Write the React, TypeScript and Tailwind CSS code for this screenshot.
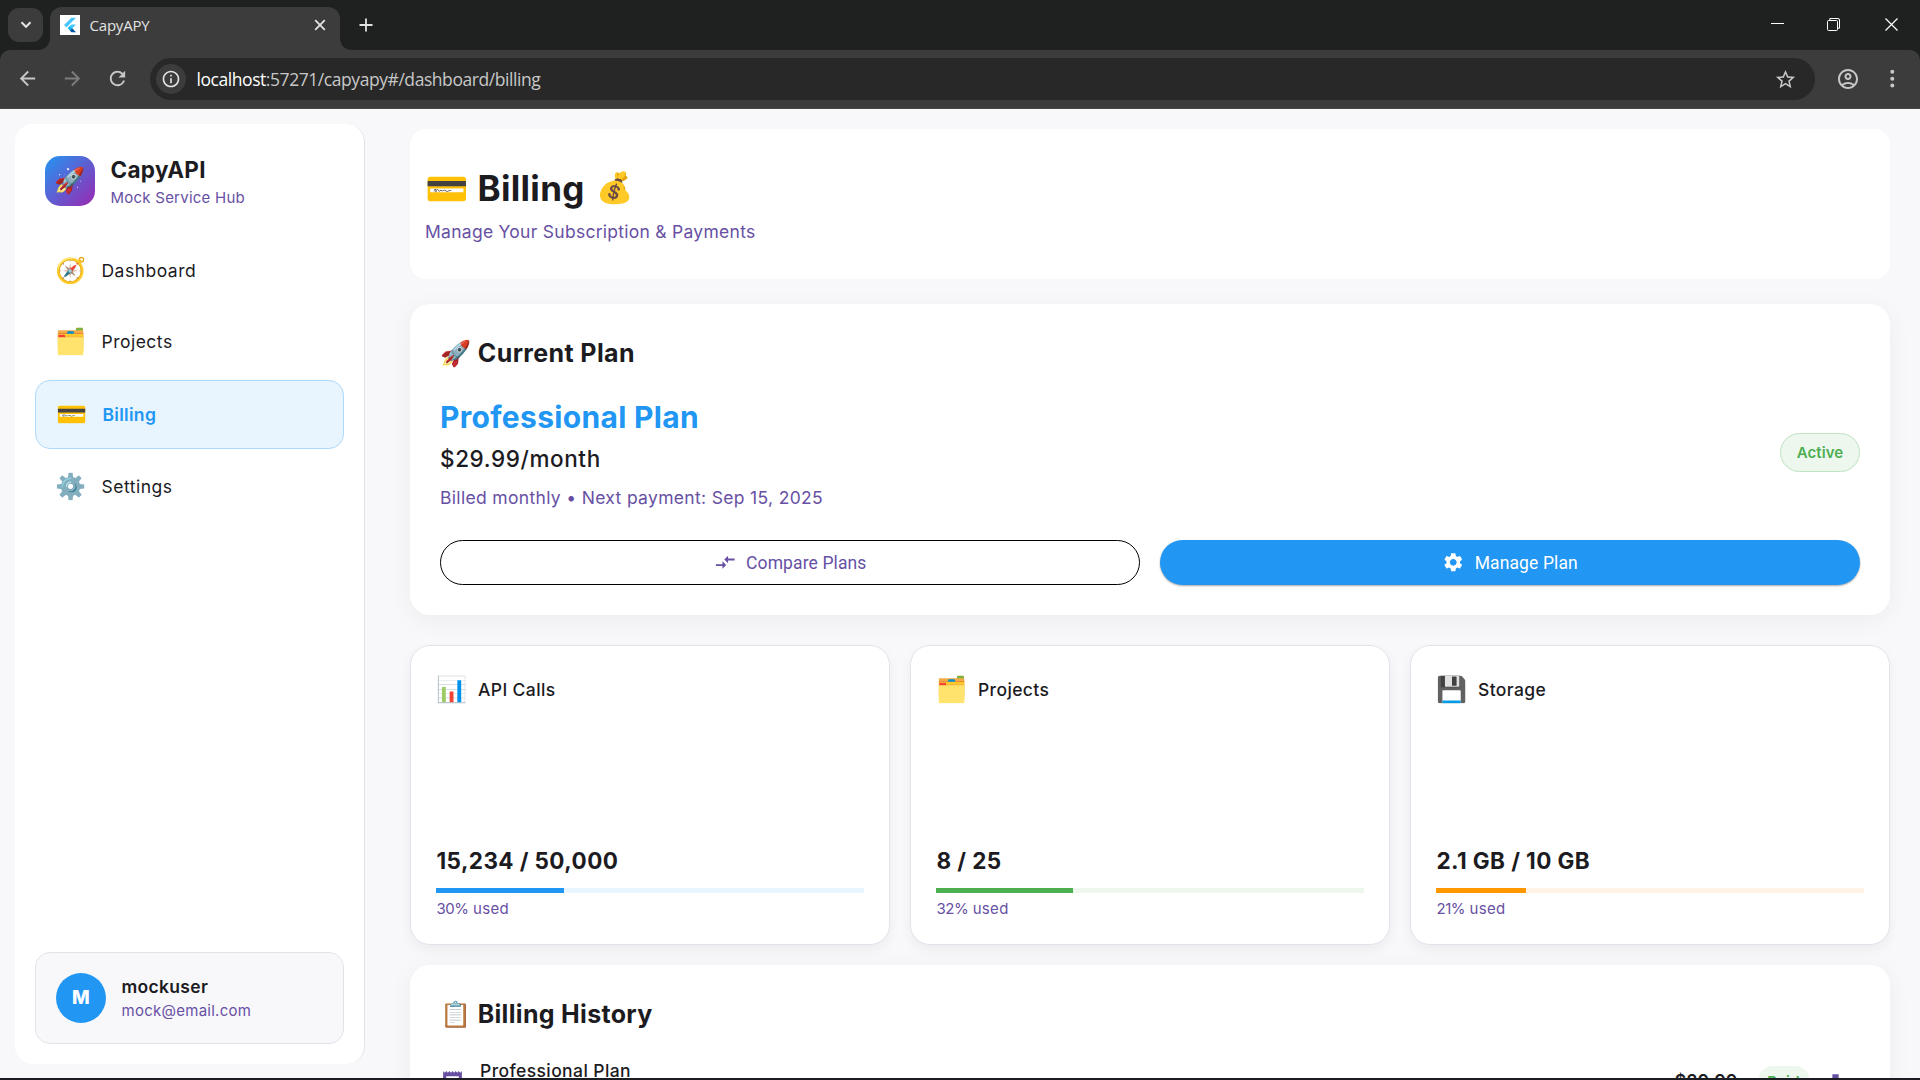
import {
  MdArrowBack,
  MdArrowForward,
  MdCompareArrows,
  MdDownload,
  MdInfoOutline,
  MdOutlineAccountCircle,
  MdReceipt,
  MdRefresh,
  MdSettings,
  MdStarBorder,
} from "react-icons/md";

function FlutterLogo() {
  return (
    <svg viewBox="0 0 20 20" className="size-5 shrink-0">
      <rect width="20" height="20" fill="#fff" />
      <path d="M11.4 2.8h4.6L6.3 12.4 4.1 10z" fill="#47c5fb" />
      <path d="M11.4 9.6H16l-3.9 3.8-2.2-2.3z" fill="#47c5fb" />
      <path d="M7.7 13.3l2.2-2.3 2.3 2.3-2.3 2.3z" fill="#00b5f8" />
      <path d="M9.9 15.6l2.3-2.3L16 17.2h-4.6z" fill="#00569e" />
    </svg>
  );
}

function TabFlare({ flip = false }: { flip?: boolean }) {
  return (
    <svg viewBox="0 0 12 12" className={flip ? "size-3 -scale-x-100 self-end" : "size-3 self-end"}>
      <path d="M12 0v12H0C7 12 12 7 12 0z" fill="#3c3c3c" />
    </svg>
  );
}

function TabStrip() {
  return (
    <div className="flex h-[50px] bg-[#1f2120]">
      <div className="mt-2 ml-2 flex h-[34px] w-[35px] items-center justify-center rounded-[11px] bg-[#3c3c3c]">
        <svg viewBox="0 0 12 8" className="h-2 w-3" fill="none" stroke="#e3e3e3" strokeWidth="2">
          <path d="M1.5 1.2L6 5.8l4.500-4.600" />
        </svg>
      </div>
      <div className="-ml-[5px] flex">
        <TabFlare />
        <div className="mt-[7px] flex w-[290px] items-start rounded-t-[12px] bg-[#3c3c3c] pl-2.5">
          <div className="mt-2 flex">
            <FlutterLogo />
          </div>
          <span className="mt-2 ml-[9.500px] text-[15px] leading-5 tracking-[-0.2px] text-[#e3e3e3]">CapyAPY</span>
          <svg viewBox="0 0 12 12" className="mt-3 mr-[14px] ml-auto size-3" stroke="#e3e3e3" strokeWidth="1.8">
            <path d="M1.200 1.200l9.600 9.600M10.800 1.200l-9.600 9.600" />
          </svg>
        </div>
        <TabFlare flip />
      </div>
      <svg viewBox="0 0 14 14" className="mt-[18px] ml-[7px] size-[14px]" stroke="#e3e3e3" strokeWidth="1.8">
        <path d="M7 0.500v13M0.500 7h13" />
      </svg>
      <div className="mt-[18px] mr-[22px] ml-auto flex text-white">
        <svg viewBox="0 0 13 13" className="size-[13px]" stroke="currentColor">
          <path d="M0 5.500h13" />
        </svg>
        <svg viewBox="0 0 13 13" className="ml-[43px] size-[13px]" fill="none" stroke="currentColor">
          <rect x="0.500" y="2.500" width="10" height="10" rx="1" />
          <path d="M2.800 2.200V0.500H11a1.500 1.500 0 011.500 1.500v8.200H10.800" />
        </svg>
        <svg viewBox="0 0 13 13" className="ml-[45px] size-[13px]" stroke="currentColor" strokeWidth="1.200">
          <path d="M0.500 0.500l12 12M12.500 0.500l-12 12" />
        </svg>
      </div>
    </div>
  );
}

function Toolbar() {
  return (
    <div className="bg-[#1f2120]">
      <div className="flex h-[59px] items-start rounded-t-[10px] border-b border-[#4a4748] bg-[#3c3c3c] pl-4 text-[#c7c7c7]">
        <div className="mt-[17px] flex gap-[22px]">
          <MdArrowBack className="size-[23px]" />
          <MdArrowForward className="size-[23px] text-[#7d7d7d]" />
          <MdRefresh className="size-[23px]" />
        </div>
        <div className="mt-2 ml-[21px] flex h-[42px] w-[1665px] items-center rounded-full bg-[#282828]">
          <div className="ml-[6px] flex size-[30px] items-center justify-center rounded-full bg-[#3c3c3c]">
            <MdInfoOutline className="size-5 text-[#e3e3e3]" />
          </div>
          <span className="ml-[10.500px] text-[17.5px] leading-6 tracking-[-0.44px] text-[#c7c7c7]">
            <span className="text-white">localhost</span>:57271/capyapy#/dashboard/billing
          </span>
          <MdStarBorder className="mr-[18px] ml-auto size-[23px]" />
        </div>
        <MdOutlineAccountCircle className="mt-[17px] ml-[21px] size-6" />
        <svg viewBox="0 0 6 20" className="mt-[19px] ml-[29px] h-5 w-[6px]" fill="currentColor">
          <circle cx="3.300" cy="2.800" r="2" />
          <circle cx="3.300" cy="9.700" r="2" />
          <circle cx="3.300" cy="16.600" r="2" />
        </svg>
      </div>
    </div>
  );
}

const navItems = [
  { emoji: "🧭", label: "Dashboard" },
  { emoji: "🗂️", label: "Projects" },
  { emoji: "💳", label: "Billing", active: true },
  { emoji: "⚙️", label: "Settings" },
];

function Sidebar() {
  return (
    <aside className="mt-[15px] ml-[15px] flex h-[940px] w-[350px] shrink-0 flex-col rounded-[18px] border-r border-[#e4e1e8] bg-white px-5 pb-5">
      <div className="mt-8 flex items-start pl-2.5">
        <div className="flex size-[50px] items-center justify-center rounded-[15px] bg-[linear-gradient(135deg,#2196f3,#9c27b0)] pb-[2px] text-[25px] leading-none">
          🚀
        </div>
        <div className="ml-[15.500px]">
          <div className="text-[22.5px] leading-[28px] font-bold">CapyAPI</div>
          <div className="mt-1 text-[15px] leading-5 tracking-[0.24px] text-[#6750a4]">Mock Service Hub</div>
        </div>
      </div>
      <nav className="mt-[30px] flex flex-col gap-[5px]">
        {navItems.map((item) => (
          <div
            key={item.label}
            className={
              item.active
                ? "flex h-[69px] items-center gap-[15px] rounded-[15px] border border-[#aed9fa] bg-[#e8f4fe] px-5 text-[17.5px] font-semibold text-[#2196f3]"
                : "flex h-[66px] items-center gap-[15px] px-5 text-[17.5px] font-normal tracking-[0.5px]"
            }
          >
            <span className="pb-[2px] text-[25px] leading-[30px] tracking-[0.3125px]">{item.emoji}</span>
            <span className="leading-6">{item.label}</span>
          </div>
        ))}
      </nav>
      <div className="mt-auto flex h-[92px] items-start rounded-[15px] border border-[#e5e1e9] bg-[#f8f8fb] px-5 pt-5">
        <div className="flex size-[50px] items-center justify-center rounded-full bg-[#2196f3] text-[18.750px] leading-none font-extrabold text-white">
          M
        </div>
        <div className="ml-[15.500px]">
          <div className="mt-[2px] text-[17.5px] leading-6 font-semibold">mockuser</div>
          <div className="mt-[2px] text-[15px] leading-5 tracking-[0.26px] text-[#6750a4]">mock@email.com</div>
        </div>
      </div>
    </aside>
  );
}

function CurrentPlan() {
  return (
    <section className="mt-[25px] h-[311px] rounded-[20px] bg-white px-[30px] pt-[34px] shadow-[0_5px_25px_rgba(0,0,0,0.05)]">
      <h2 className="text-[25px] leading-[30px] font-bold tracking-[0.38px]">🚀 Current Plan</h2>
      <div className="mt-[31px] flex justify-between">
        <div>
          <div className="text-[30px] leading-9 font-bold text-[#2196f3]">Professional Plan</div>
          <div className="mt-[10px] text-[22.5px] leading-7 font-medium tracking-[0.6px]">$29.99/month</div>
          <div className="mt-[12px] text-[17.5px] leading-[25px] tracking-[0.33px] text-[#6750a4]">
            Billed monthly • Next payment: Sep 15, 2025
          </div>
        </div>
        <div className="mt-[34px] flex h-[39px] w-[80px] items-center justify-center rounded-full border border-[#bfe3c1] bg-[#edf7ee] pt-px text-[15px] font-semibold tracking-[0.1px] text-[#4caf50]">
          Active
        </div>
      </div>
      <div className="mt-[30px] grid grid-cols-2 gap-5 font-[Roboto] text-[17.5px] tracking-[0.11px]">
        <button className="flex h-[45px] items-center justify-center gap-[10px] rounded-full border border-black text-[#6750a4]">
          <MdCompareArrows className="size-[22.5px]" />
          <span className="pt-px">Compare Plans</span>
        </button>
        <button className="flex h-[45px] items-center justify-center gap-[10px] rounded-full bg-[#2196f3] text-white shadow-[0_1px_2px_rgba(0,0,0,0.35)]">
          <MdSettings className="size-[22.5px]" />
          <span className="pt-px font-[450]">Manage Plan</span>
        </button>
      </div>
    </section>
  );
}

const usage = [
  { emoji: "📊", label: "API Calls", value: "15,234 / 50,000", percent: 30, track: "bg-[#e8f4fe]", fill: "bg-[#2196f3]" },
  { emoji: "🗂️", label: "Projects", value: "8 / 25", percent: 32, track: "bg-[#edf7ee]", fill: "bg-[#4caf50]" },
  { emoji: "💾", label: "Storage", value: "2.1 GB / 10 GB", percent: 21, track: "bg-[#fff4e5]", fill: "bg-[#ff9800]" },
];

function UsageCards() {
  return (
    <div className="mt-[30px] grid grid-cols-3 gap-5">
      {usage.map((u) => (
        <section
          key={u.label}
          className="flex h-[300px] flex-col rounded-[20px] border border-[#e7e0ec] bg-white px-[25px] pt-7 pb-[25px] shadow-[0_5px_12px_rgba(0,0,0,0.05)]"
        >
          <div className="flex items-start gap-[10.500px]">
            <span className="text-[25px] leading-[30px]">{u.emoji}</span>
            <span className="mt-px text-[17.5px] leading-[30px] font-medium tracking-[0.4px]">{u.label}</span>
          </div>
          <div className="mt-auto pl-[0.500px] text-[22.5px] leading-7 font-bold tracking-[0.41px]">{u.value}</div>
          <div className={`mt-[13px] h-[5px] ${u.track}`}>
            <div className={`h-full ${u.fill}`} style={{ width: `${u.percent}%` }} />
          </div>
          <div className="mt-[6px] pl-[0.500px] text-[15px] leading-5 text-[#6750a4]">
            <span className="tracking-[-0.5px]">{u.percent}%</span> used
          </div>
        </section>
      ))}
    </div>
  );
}

function BillingHistory() {
  return (
    <section className="mt-5 h-[300px] rounded-[20px] bg-white px-[30px] pt-[34px] shadow-[0_5px_25px_rgba(0,0,0,0.05)]">
      <h2 className="text-[25px] leading-[30px] font-bold">📋 Billing History</h2>
      <div className="mt-[29px] flex items-start">
        <MdReceipt className="mt-[11px] size-[25px] text-[#6750a4]" />
        <span className="ml-[15px] text-[17.5px] leading-[25px] font-medium tracking-[0.4px]">Professional Plan</span>
        <div className="mr-[12.500px] ml-auto flex items-start">
          <span className="mt-[10px] text-[17.5px] leading-[25px] font-semibold">$29.99</span>
          <span className="mt-[8px] ml-[20px] flex h-[31px] w-[52px] items-center justify-center rounded-[15px] bg-[#edf7ee] pt-px text-[15px] font-semibold text-[#4caf50]">
            Paid
          </span>
          <MdDownload className="mt-[13px] ml-[13px] size-[25px] text-[#6750a4]" />
        </div>
      </div>
    </section>
  );
}

export default function App() {
  return (
    <div className="flex h-[1080px] w-[1920px] flex-col overflow-hidden bg-[#1b1d22]">
      <header className="shrink-0 font-['Open_Sans',sans-serif]">
        <TabStrip />
        <Toolbar />
      </header>
      <div className="flex h-[969px] shrink-0 overflow-hidden bg-[#f8f8fb] font-[Inter,'Noto_Color_Emoji',sans-serif] tracking-[0.3125px] text-[#1c1b1f]">
        <Sidebar />
        <main className="mt-5 ml-[45px] w-[1480px]">
          <section className="h-[150px] rounded-[16px] bg-white px-[15px] pt-[34px]">
            <h1 className="flex text-[35px] leading-[50px] font-bold">
              💳 Billing<span className="ml-[12px] text-[30px] leading-[49px]">💰</span>
            </h1>
            <p className="mt-[6px] text-[17.5px] leading-[25px] tracking-[0.27px] text-[#6750a4]">
              Manage Your Subscription &amp; Payments
            </p>
          </section>
          <CurrentPlan />
          <UsageCards />
          <BillingHistory />
        </main>
      </div>
    </div>
  );
}
